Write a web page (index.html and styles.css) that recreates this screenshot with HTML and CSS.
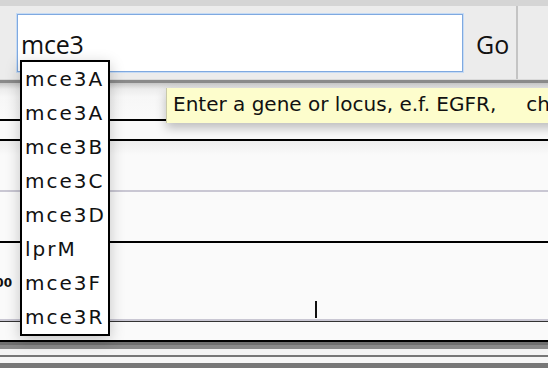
FILE: index.html
```html
<!DOCTYPE html>
<html>
<head>
<meta charset="utf-8">
<link rel="stylesheet" href="styles.css">
</head>
<body>
<div class="app">
  <div class="topstrip"></div>
  <div class="toolbar">
    <div class="search"><span class="query">mce3</span></div>
    <div class="go">Go</div>
    <div class="sep"></div>
  </div>
  <div class="shade"></div>
  <div class="track t0"></div>
  <div class="track t1"></div>
  <div class="track t2"></div>
  <div class="track t3"></div>
  <div class="track t4"><div class="label">100</div><div class="tick"></div></div>
  <div class="track t5"></div>
  <div class="bands">
    <div class="band b1"></div>
    <div class="band b2"></div>
    <div class="band b3"></div>
    <div class="band b4"></div>
    <div class="band b5"></div>
    <div class="band b6"></div>
  </div>
  <div class="tooltip">Enter a gene or locus, e.f. EGFR,<span class="gap">chr1:1-100000</span></div>
  <ul class="suggest">
    <li>mce3A</li>
    <li>mce3A</li>
    <li>mce3B</li>
    <li>mce3C</li>
    <li>mce3D</li>
    <li>lprM</li>
    <li>mce3F</li>
    <li>mce3R</li>
  </ul>
</div>
</body>
</html>
```
FILE: styles.css
```css
html, body {
  margin: 0;
  padding: 0;
  background: #fafafa;
}
.app {
  position: relative;
  width: 548px;
  height: 368px;
  overflow: hidden;
  background: #fafafa;
  font-family: "Open Sans", "DejaVu Sans", sans-serif;
  color: #111;
}
.topstrip {
  height: 6px;
  background: #d5d5d5;
}
.toolbar {
  display: flex;
  height: 74px;
  background: #ececec;
  box-sizing: border-box;
  border-bottom: 1px solid #dadada;
}
.search {
  align-self: flex-start;
  margin: 8px 0 0 17px;
  width: 446px;
  height: 58px;
  box-sizing: border-box;
  background: #fff;
  border: 1px solid #7fa9e0;
  box-shadow: 0 0 0 1px #c6dbf4;
  padding: 17px 0 0 3px;
}
.query {
  display: block;
  font-size: 25px;
  line-height: 25px;
  letter-spacing: -0.2px;
}
.go {
  align-self: flex-start;
  margin: 26px 0 0 13px;
  width: 40px;
  font-size: 25px;
  line-height: 25px;
}
.sep {
  width: 2px;
  background: #c4c4c4;
}
.shade {
  height: 3px;
  background: #8a8a8a;
}
.track {
  position: relative;
  box-sizing: border-box;
}
.t0 {
  height: 38px;
  border-bottom: 2px solid #000;
  background: linear-gradient(#c6c6c6, #ececec 6px, #f7f7f7 14px, #fafafa);
}
.t1 {
  height: 20px;
  border-bottom: 2px solid #000;
}
.t2 {
  height: 51px;
  border-bottom: 2px solid #c9c7d3;
  background: linear-gradient(#efefef, #fafafa 14px);
}
.t3 {
  height: 51px;
  border-bottom: 2px solid #000;
}
.t4 {
  height: 78px;
  padding-top: 33px;
  border-bottom: 2px solid #c9c7d3;
}
.t5 {
  height: 21px;
  border-top: 1px solid #333;
  border-bottom: 2px solid #000;
}
.label {
  margin-left: -13px;
  font-family: "DejaVu Sans", sans-serif;
  font-weight: bold;
  font-size: 12px;
  line-height: 14px;
}
.tick {
  position: absolute;
  left: 315px;
  top: 58px;
  width: 2px;
  height: 17px;
  background: #111;
}
.b1 { height: 3px; background: #6f6f6f; }
.b2 { height: 4px; background: #8a8a8a; }
.b3 { height: 6px; background: #f4f4f4; }
.b4 { height: 2px; background: #777; }
.b5 { height: 6px; background: #f6f6f6; }
.b6 { height: 6px; background: #777; }
.tooltip {
  position: absolute;
  left: 166px;
  top: 88px;
  width: 420px;
  height: 35px;
  box-sizing: border-box;
  padding: 4px 0 0 6px;
  background: #fdfdcc;
  border-left: 1px solid #c9c9a8;
  box-shadow: 0 5px 10px rgba(0,0,0,0.25);
  font-family: "DejaVu Sans", sans-serif;
  font-size: 20px;
  line-height: 25px;
  white-space: nowrap;
}
.gap {
  margin-left: 30px;
}
.suggest {
  position: absolute;
  left: 20px;
  top: 60px;
  width: 90px;
  margin: 0;
  padding: 0;
  list-style: none;
  box-sizing: border-box;
  background: #fff;
  border: 2px solid #000;
  box-shadow: 0 4px 14px rgba(0,0,0,0.22);
}
.suggest li {
  height: 34px;
  line-height: 34px;
  padding-left: 3px;
  font-family: "DejaVu Sans", sans-serif;
  font-size: 20px;
  letter-spacing: 2px;
  white-space: nowrap;
}
```
